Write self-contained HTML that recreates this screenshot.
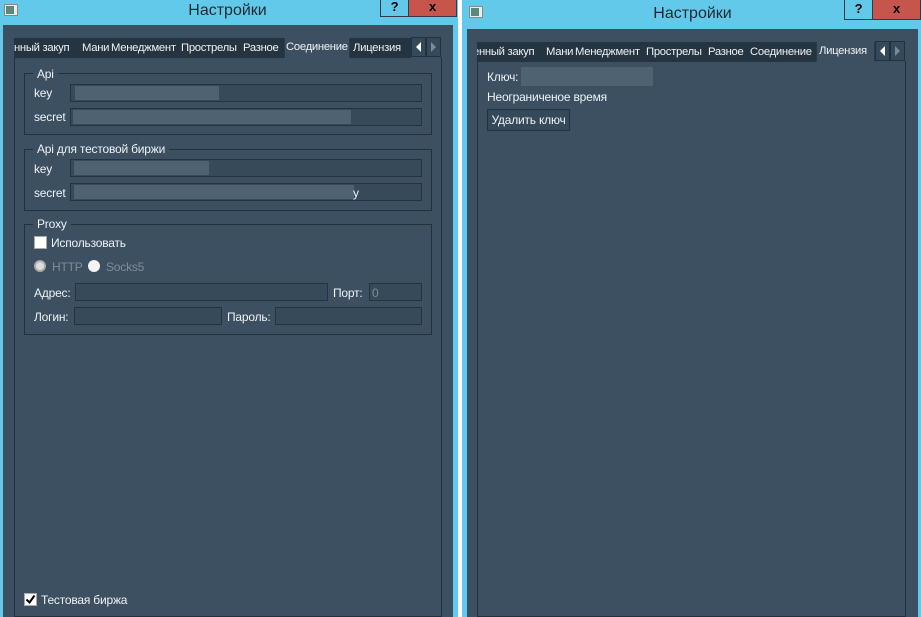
<!DOCTYPE html>
<html><head><meta charset="utf-8"><style>
*{margin:0;padding:0;box-sizing:border-box}
body{width:921px;height:617px;overflow:hidden;background:#fff;position:relative;font-family:"Liberation Sans","DejaVu Sans",sans-serif;font-size:12px;letter-spacing:-0.2px;color:#eef2f5}
.a{position:absolute}
.blue{background:#63c9ea}
.dark{background:#3c5061}
.title{font-size:16px;color:#1d2a33;text-align:center;letter-spacing:0}
.btnq{background:#63c9ea;border:1px solid #2c3d48;border-top:none;text-align:center;color:#000;font-weight:bold;font-size:13px}
.btnx{background:#c6554b;border:1px solid #2c3d48;border-top:none;text-align:center;color:#000;font-weight:bold;font-size:13px}
.tabbar{background:#243440;height:20px;white-space:nowrap;overflow:hidden;line-height:20px;font-size:11.3px;letter-spacing:-0.3px}
.tab{position:absolute;top:0;height:20px;line-height:20px;color:#eef2f5}
.sel{background:#3c5061;border:1px solid #2a3a47;border-bottom:none}
.pane{border:1px solid #23313c;border-top:none}
.grp{border:1px solid #23313c}
.gt{background:#3c5061;padding:0 4px;line-height:14px}
.inp{background:#364a5a;border:1px solid #25333f}
.blur{background:#4f6272}
.lbl{line-height:14px}
.arr{background:#34495a;border:1px solid #23313c;height:20px;width:15px}
</style></head><body>
<div class="a blue" style="left:0;top:0;width:458px;height:617px"></div>
<div class="a" style="left:4px;top:4px;width:14px;height:12px;background:#e8eef0;border:1px solid #888"><div style="margin:1px;width:8px;height:8px;background:#5a8a7a"></div></div>
<div class="a title" style="left:120px;top:2px;width:215px">Настройки</div>
<div class="a btnq" style="left:380px;top:0;width:29px;height:17px;line-height:14px">?</div>
<div class="a btnx" style="left:408px;top:0;width:49px;height:17px;line-height:14px">x</div>
<div class="a dark" style="left:3px;top:25px;width:450px;height:592px"></div>
<div class="a tabbar" style="left:14px;top:38px;width:397px">
 <div class="tab" style="left:-6px">енный закуп</div>
 <div class="tab" style="left:68px">Мани</div>
 <div class="tab" style="left:97px">Менеджмент</div>
 <div class="tab" style="left:167px">Прострелы</div>
 <div class="tab" style="left:229px">Разное</div>
 <div class="tab sel" style="left:270px;width:66px;padding-left:1px;line-height:18px;top:-1px;height:21px">Соединение</div>
 <div class="tab" style="left:339px">Лицензия</div>
</div>
<div class="a arr" style="left:411px;top:37px"><svg width="13" height="18"><path d="M9 4 L4 9 L9 14Z" fill="#fff"/></svg></div>
<div class="a arr" style="left:426px;top:37px"><svg width="13" height="18"><path d="M4 4 L9 9 L4 14Z" fill="#7d8a94"/></svg></div>
<div class="a pane" style="left:14px;top:57px;width:428px;height:560px"></div>

<div class="a grp" style="left:24px;top:73px;width:408px;height:62px"></div>
<div class="a gt" style="left:33px;top:67px">Api</div>
<div class="a lbl" style="left:34px;top:86px">key</div>
<div class="a inp" style="left:70px;top:84px;width:352px;height:18px"></div>
<div class="a blur" style="left:75px;top:86px;width:144px;height:14px"></div>
<div class="a lbl" style="left:34px;top:110px">secret</div>
<div class="a inp" style="left:70px;top:108px;width:352px;height:18px"></div>
<div class="a blur" style="left:73px;top:110px;width:278px;height:14px"></div>

<div class="a grp" style="left:24px;top:149px;width:408px;height:62px"></div>
<div class="a gt" style="left:33px;top:142px">Api для тестовой биржи</div>
<div class="a lbl" style="left:34px;top:162px">key</div>
<div class="a inp" style="left:70px;top:159px;width:352px;height:18px"></div>
<div class="a blur" style="left:74px;top:161px;width:135px;height:14px"></div>
<div class="a lbl" style="left:34px;top:186px">secret</div>
<div class="a inp" style="left:70px;top:183px;width:352px;height:18px"></div>
<div class="a blur" style="left:74px;top:185px;width:280px;height:14px"></div>
<div class="a lbl" style="left:353px;top:186px">y</div>

<div class="a grp" style="left:24px;top:224px;width:408px;height:111px"></div>
<div class="a gt" style="left:33px;top:217px">Proxy</div>
<div class="a" style="left:34px;top:236px;width:13px;height:13px;background:#fff;border:1px solid #aaa"></div>
<div class="a lbl" style="left:51px;top:236px">Использовать</div>
<div class="a" style="left:34px;top:260px;width:12px;height:12px;border-radius:50%;background:#ddd;border:2px solid #aaa"></div>
<div class="a lbl" style="left:52px;top:260px;color:#7f8d98">HTTP</div>
<div class="a" style="left:88px;top:260px;width:12px;height:12px;border-radius:50%;background:#f4f4f4"></div>
<div class="a lbl" style="left:106px;top:260px;color:#7f8d98">Socks5</div>
<div class="a lbl" style="left:34px;top:286px">Адрес:</div>
<div class="a inp" style="left:75px;top:283px;width:253px;height:18px"></div>
<div class="a lbl" style="left:333px;top:286px">Порт:</div>
<div class="a inp" style="left:369px;top:283px;width:53px;height:18px"></div>
<div class="a lbl" style="left:372px;top:286px;color:#7f8d98">0</div>
<div class="a lbl" style="left:34px;top:310px">Логин:</div>
<div class="a inp" style="left:74px;top:307px;width:148px;height:18px"></div>
<div class="a lbl" style="left:227px;top:310px">Пароль:</div>
<div class="a inp" style="left:275px;top:307px;width:147px;height:18px"></div>

<div class="a" style="left:24px;top:593px;width:13px;height:13px;background:#fff;border:1px solid #aaa"><svg width="11" height="11" style="display:block"><path d="M1.5 5.5 L4.5 8.5 L9.5 1.5" stroke="#000" stroke-width="2" fill="none"/></svg></div>
<div class="a lbl" style="left:41px;top:593px">Тестовая биржа</div>

<div class="a blue" style="left:462px;top:0;width:459px;height:617px"></div>
<div class="a" style="left:469px;top:6px;width:14px;height:12px;background:#e8eef0;border:1px solid #888"><div style="margin:1px;width:8px;height:8px;background:#5a8a7a"></div></div>
<div class="a title" style="left:585px;top:5px;width:215px">Настройки</div>
<div class="a btnq" style="left:844px;top:0;width:29px;height:20px;line-height:17px">?</div>
<div class="a btnx" style="left:872px;top:0;width:49px;height:20px;line-height:17px">x</div>
<div class="a dark" style="left:467px;top:29px;width:451px;height:588px"></div>
<div class="a tabbar" style="left:477px;top:42px;width:398px">
 <div class="tab" style="left:-4px">енный закуп</div>
 <div class="tab" style="left:69px">Мани</div>
 <div class="tab" style="left:98px">Менеджмент</div>
 <div class="tab" style="left:169px">Прострелы</div>
 <div class="tab" style="left:231px">Разное</div>
 <div class="tab" style="left:273px">Соединение</div>
 <div class="tab sel" style="left:339px;width:59px;padding-left:2px;line-height:18px;top:-1px;height:21px">Лицензия</div>
</div>
<div class="a arr" style="left:875px;top:41px"><svg width="13" height="18"><path d="M9 4 L4 9 L9 14Z" fill="#fff"/></svg></div>
<div class="a arr" style="left:890px;top:41px"><svg width="13" height="18"><path d="M4 4 L9 9 L4 14Z" fill="#7d8a94"/></svg></div>
<div class="a pane" style="left:477px;top:61px;width:429px;height:556px"></div>
<div class="a lbl" style="left:487px;top:70px">Ключ:</div>
<div class="a blur" style="left:521px;top:67px;width:132px;height:19px"></div>
<div class="a lbl" style="left:487px;top:90px">Неограниченое время</div>
<div class="a" style="left:487px;top:109px;width:83px;height:22px;background:#34495a;border:1px solid #23313c;line-height:20px;text-align:center">Удалить ключ</div>
</body></html>
